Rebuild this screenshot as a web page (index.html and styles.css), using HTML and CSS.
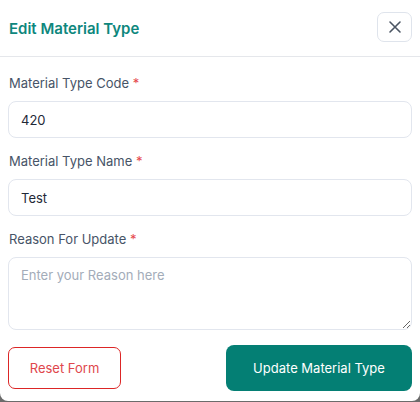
FILE: index.html
```html
<!DOCTYPE html>
<html>
<head>
<meta charset="utf-8">
<link rel="stylesheet" href="styles.css">
</head>
<body>
<div class="modal">
  <div class="header">
    <h2 class="title">Edit Material Type</h2>
    <button class="close" aria-label="Close">
      <svg width="14" height="14" viewBox="0 0 14 14"><path d="M2 2L12 12M12 2L2 12" stroke="#4b5563" stroke-width="1.6" stroke-linecap="round"/></svg>
    </button>
  </div>
  <form class="body">
    <div class="field">
      <label class="label">Material Type Code <span class="req">*</span></label>
      <input class="input" type="text" value="420">
    </div>
    <div class="field">
      <label class="label">Material Type Name <span class="req">*</span></label>
      <input class="input" type="text" value="Test">
    </div>
    <div class="field">
      <label class="label">Reason For Update <span class="req">*</span></label>
      <textarea class="textarea" placeholder="Enter your Reason here"></textarea>
    </div>
    <div class="actions">
      <button type="button" class="btn-reset">Reset Form</button>
      <button type="button" class="btn-update">Update Material Type</button>
    </div>
  </form>
</div>
</body>
</html>
```

FILE: styles.css
```css
* { box-sizing: border-box; }
html, body { margin: 0; padding: 0; }
body {
  background: #6b6b6b;
  font-family: Inter, "Noto Sans", sans-serif;
  width: 420px;
  height: 402px;
  overflow: hidden;
}
.modal {
  width: 420px;
  height: 401px;
  background: #fff;
  border-radius: 0 0 8px 8px;
}
.header {
  height: 57px;
  display: flex;
  align-items: center;
  justify-content: space-between;
  padding: 0 8px 0 9px;
  border-bottom: 1px solid #e5e7eb;
}
.title {
  margin: 0;
  font-size: 15px;
  font-weight: 600;
  color: #0e877d;
}
.close {
  width: 35px;
  height: 30px;
  border: 1px solid #dfe4ec;
  border-radius: 7px;
  background: #fff;
  display: flex;
  align-items: center;
  justify-content: center;
  padding: 0;
  margin-top: -2px;
}
.body {
  padding: 17px 8px 0 8px;
  display: flex;
  flex-direction: column;
  gap: 14px;
}
.field {
  display: flex;
  flex-direction: column;
  gap: 9px;
}
.label {
  font-size: 13px;
  line-height: 18px;
  color: #475467;
  padding-left: 1px;
}
.req { color: #e5484d; }
.input, .textarea {
  width: 100%;
  border: 1px solid #e2e6ee;
  border-radius: 8px;
  font-family: Inter, "Noto Sans", sans-serif;
  font-size: 13px;
  color: #1f2937;
  background: #fff;
  outline: none;
}
.input {
  height: 37px;
  padding: 0 12px;
}
.textarea {
  height: 73px;
  padding: 9px 12px;
  resize: vertical;
  display: block;
}
.textarea::placeholder { color: #a3acb9; }
.actions {
  display: flex;
  justify-content: space-between;
  align-items: center;
  margin-top: 1px;
}
.btn-reset {
  width: 113px;
  height: 42px;
  border: 1px solid #dc2626;
  border-radius: 7px;
  background: #fff;
  color: #e0474c;
  font-family: Inter, "Noto Sans", sans-serif;
  font-size: 13px;
}
.btn-update {
  width: 186px;
  height: 46px;
  border: none;
  border-radius: 8px;
  background: #047f74;
  color: #fff;
  font-family: Inter, "Noto Sans", sans-serif;
  font-size: 13px;
}
```
